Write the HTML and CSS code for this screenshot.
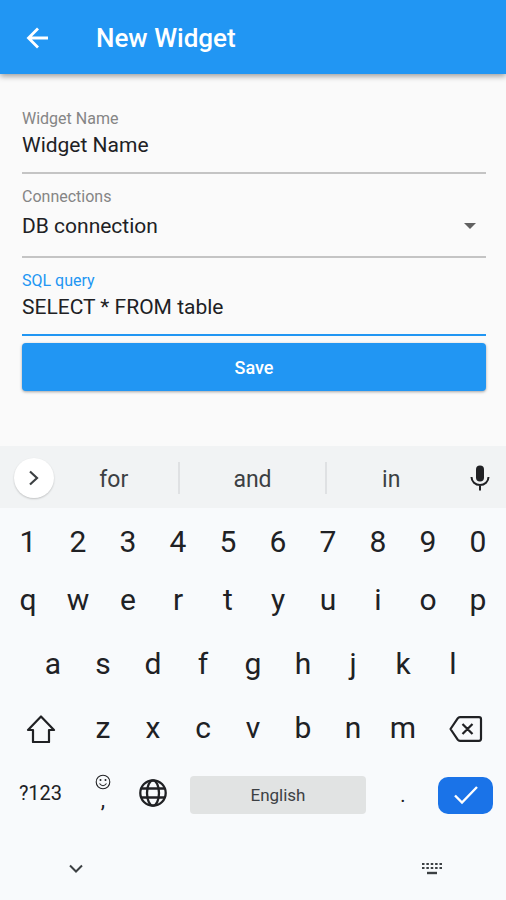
FILE: index.html
```html
<!DOCTYPE html>
<html lang="en">
<head>
<meta charset="utf-8">
<meta name="viewport" content="width=device-width, initial-scale=1">
<title>New Widget</title>
<link rel="stylesheet" href="styles.css">
</head>
<body>
<header class="app-bar">
  <button class="back" type="button" aria-label="Back">
    <svg width="24" height="24" viewBox="0 0 24 24"><path d="M22 12H3M12 2.500 2.500 12l9.500 9.500" fill="none" stroke="currentColor" stroke-width="2.800"/></svg>
  </button>
  <h1 class="title">New Widget</h1>
</header>

<form class="form">
  <div class="field">
    <label class="label" for="name">Widget Name</label>
    <input class="control" id="name" type="text" value="Widget Name">
  </div>
  <div class="field">
    <label class="label" for="connection">Connections</label>
    <div class="select-wrap">
      <select class="control control-select" id="connection"><option>DB connection</option></select>
      <svg class="caret" width="12" height="6" viewBox="0 0 12 6"><path d="M0 0h12L6 6z" fill="currentColor"/></svg>
    </div>
  </div>
  <div class="field field-active">
    <label class="label" for="query">SQL query</label>
    <input class="control" id="query" type="text" value="SELECT * FROM table">
  </div>
  <button class="save" type="button">Save</button>
</form>

<section class="keyboard" aria-label="Keyboard">
  <div class="suggestions">
    <button class="expand" type="button" aria-label="More">
      <svg width="12" height="16" viewBox="0 0 12 16"><path d="M2 1.500 9 8l-7 6.500" fill="none" stroke="currentColor" stroke-width="2.200"/></svg>
    </button>
    <div class="words">
      <button class="word" type="button">for</button>
      <button class="word word-main" type="button">and</button>
      <button class="word" type="button">in</button>
    </div>
    <button class="mic" type="button" aria-label="Voice input">
      <svg width="20" height="26" viewBox="0 0 20 26"><rect x="6" y="0.500" width="8" height="16" rx="4" fill="currentColor"/><path d="M1.500 12a8.500 8 0 0 0 17 0M10 20v5.500" fill="none" stroke="currentColor" stroke-width="2"/></svg>
    </button>
  </div>

  <div class="keys">
    <div class="row row-digits">
      <button class="key" type="button">1</button><button class="key" type="button">2</button><button class="key" type="button">3</button><button class="key" type="button">4</button><button class="key" type="button">5</button><button class="key" type="button">6</button><button class="key" type="button">7</button><button class="key" type="button">8</button><button class="key" type="button">9</button><button class="key" type="button">0</button>
    </div>
    <div class="row">
      <button class="key" type="button">q</button><button class="key" type="button">w</button><button class="key" type="button">e</button><button class="key" type="button">r</button><button class="key" type="button">t</button><button class="key" type="button">y</button><button class="key" type="button">u</button><button class="key" type="button">i</button><button class="key" type="button">o</button><button class="key" type="button">p</button>
    </div>
    <div class="row row-home">
      <button class="key" type="button">a</button><button class="key" type="button">s</button><button class="key" type="button">d</button><button class="key" type="button">f</button><button class="key" type="button">g</button><button class="key" type="button">h</button><button class="key" type="button">j</button><button class="key" type="button">k</button><button class="key" type="button">l</button>
    </div>
    <div class="row">
      <button class="key key-wide key-icon" type="button" aria-label="Shift">
        <svg width="30" height="28" viewBox="0 0 30 28"><path d="M15 1.500 28 15h-5v12H7V15H2z" fill="none" stroke="currentColor" stroke-width="2.200" stroke-linejoin="round"/></svg>
      </button>
      <button class="key" type="button">z</button><button class="key" type="button">x</button><button class="key" type="button">c</button><button class="key" type="button">v</button><button class="key" type="button">b</button><button class="key" type="button">n</button><button class="key" type="button">m</button>
      <button class="key key-wide key-icon" type="button" aria-label="Delete">
        <svg width="34" height="26" viewBox="0 0 34 26"><path d="M11 1.200h19a2 2 0 0 1 2 2v19.600a2 2 0 0 1-2 2H11a3 3 0 0 1-2.300-1.200L1.500 13l7.200-10.600A3 3 0 0 1 11 1.200zM13.500 8l10 10M23.500 8l-10 10" fill="none" stroke="currentColor" stroke-width="2.200" stroke-linejoin="round"/></svg>
      </button>
    </div>
    <div class="row row-bottom">
      <button class="key key-symbols" type="button">?123</button>
      <button class="key key-comma" type="button">
        <svg width="16" height="16" viewBox="0 0 16 16"><circle cx="8" cy="8" r="6.800" fill="none" stroke="currentColor" stroke-width="1.100"/><circle cx="5.500" cy="6" r="1" fill="currentColor"/><circle cx="10.500" cy="6" r="1" fill="currentColor"/><path d="M4.500 9.500q3.500 4.500 7 0" fill="none" stroke="currentColor" stroke-width="1.100"/></svg>
        <span class="comma">,</span>
      </button>
      <button class="key key-globe" type="button" aria-label="Language">
        <svg width="28" height="28" viewBox="0 0 28 28"><g fill="none" stroke="currentColor" stroke-width="2.300"><circle cx="14" cy="14" r="12.700"/><ellipse cx="14" cy="14" rx="6" ry="12.700"/><path d="M2.500 9.500h23M2.500 18.500h23"/></g></svg>
      </button>
      <button class="key key-space" type="button">English</button>
      <button class="key key-dot" type="button">.</button>
      <button class="key key-enter" type="button" aria-label="Done">
        <svg width="24" height="20" viewBox="0 0 24 20"><path d="m1 10.500 7 7L23 2" fill="none" stroke="currentColor" stroke-width="2.400"/></svg>
      </button>
    </div>
  </div>

  <div class="nav">
    <button class="nav-button" type="button" aria-label="Hide keyboard">
      <svg width="14" height="10" viewBox="0 0 14 10"><path d="m1 1.500 6 6 6-6" fill="none" stroke="currentColor" stroke-width="2"/></svg>
    </button>
    <button class="nav-button" type="button" aria-label="Switch keyboard">
      <svg width="22" height="14" viewBox="0 0 22 14"><path d="M1 2h20M1 6h20" fill="none" stroke="currentColor" stroke-width="2" stroke-dasharray="2.500 1.870"/><path d="M6 11h10" stroke="currentColor" stroke-width="2.400"/></svg>
    </button>
  </div>
</section>
</body>
</html>
```
FILE: styles.css
```css
* {
  box-sizing: border-box;
}

body {
  margin: 0;
  min-height: 100vh;
  display: flex;
  flex-direction: column;
  background: #fafafa;
  color: #202124;
  font-family: Roboto, "Liberation Sans", sans-serif;
}

button,
input,
select {
  margin: 0;
  padding: 0;
  border: 0;
  border-radius: 0;
  outline: 0;
  background: none;
  color: inherit;
  font: inherit;
}

svg {
  display: block;
}

.app-bar {
  display: flex;
  align-items: center;
  gap: 46px;
  height: 74px;
  padding: 2px 26px 0;
  background: #2196f3;
  color: #fff;
  box-shadow: 0 2px 6px rgba(0, 0, 0, 0.4);
}

.title {
  margin: 0;
  font-size: 26px;
  font-weight: 500;
  line-height: 32px;
}

.form {
  display: flex;
  flex-direction: column;
  padding: 36px 20px 24px 22px;
}

.field {
  display: flex;
  flex-direction: column;
  padding-bottom: 10px;
  border-bottom: 2px solid #c4c4c4;
}

.field + .field {
  padding-top: 14px;
}

.label {
  color: #858585;
  font-size: 16px;
  line-height: 18px;
}

.control {
  width: 100%;
  height: 34px;
  font-size: 21px;
}

.control-select {
  height: 40px;
  appearance: none;
}

.select-wrap {
  position: relative;
}

.caret {
  position: absolute;
  top: 17px;
  right: 10px;
  color: #616161;
  pointer-events: none;
}

.field-active {
  border-color: #2196f3;
}

.field-active .label {
  color: #2196f3;
}

.save {
  height: 48px;
  margin-top: 7px;
  border-radius: 4px;
  background: #2196f3;
  color: #fff;
  font-size: 18px;
  font-weight: 500;
  box-shadow: 0 1px 3px rgba(0, 0, 0, 0.35);
}

.keyboard {
  margin-top: auto;
  background: #f8fafc;
}

.suggestions {
  display: flex;
  align-items: center;
  height: 62px;
  padding: 2px 16px 0 14px;
  background: #f1f3f4;
}

.expand {
  display: grid;
  place-items: center;
  width: 40px;
  height: 40px;
  border-radius: 50%;
  background: #fff;
  color: #3c4043;
  box-shadow: 0 1px 2px rgba(0, 0, 0, 0.2);
}

.words {
  display: flex;
  flex: 1;
  margin: 0 15px 0 -4px;
}

.word {
  flex: 7 1 0;
  height: 32px;
  padding-top: 2px;
  color: #3c4043;
  font-size: 23px;
}

.word-main {
  flex-grow: 8;
  border: solid #dfe1e3;
  border-width: 0 2px;
}

.keys {
  padding: 7px 3px 0;
}

.row {
  display: flex;
  height: 64px;
}

.row-digits {
  height: 52px;
}

.row-home {
  padding: 0 5%;
}

.row-bottom {
  display: grid;
  grid-template-columns: 3fr 2fr 2fr 8fr 2fr 3fr;
  height: 72px;
  align-items: center;
}

.key {
  display: flex;
  flex: 2 1 0;
  align-items: center;
  justify-content: center;
  font-size: 30px;
}

.key-wide {
  flex-grow: 3;
}

.key-icon {
  padding-top: 4px;
}

.key-symbols {
  padding-bottom: 4px;
  font-size: 20px;
}

.key-comma {
  flex-direction: column;
  padding-bottom: 6px;
  font-size: 22px;
}

.comma {
  line-height: 20px;
}

.key-globe {
  padding-bottom: 4px;
}

.key-space {
  height: 38px;
  margin: 0 12px;
  border-radius: 4px;
  background: #e1e3e3;
  color: #3c4043;
  font-size: 17px;
}

.key-dot {
  font-size: 20px;
}

.key-enter {
  height: 37px;
  margin: 0 10px;
  border-radius: 10px;
  background: #1a73e8;
  color: #fff;
}

.nav {
  display: flex;
  align-items: center;
  justify-content: space-between;
  height: 69px;
  padding: 6px 63px 0 69px;
  color: #3c4043;
}
```
